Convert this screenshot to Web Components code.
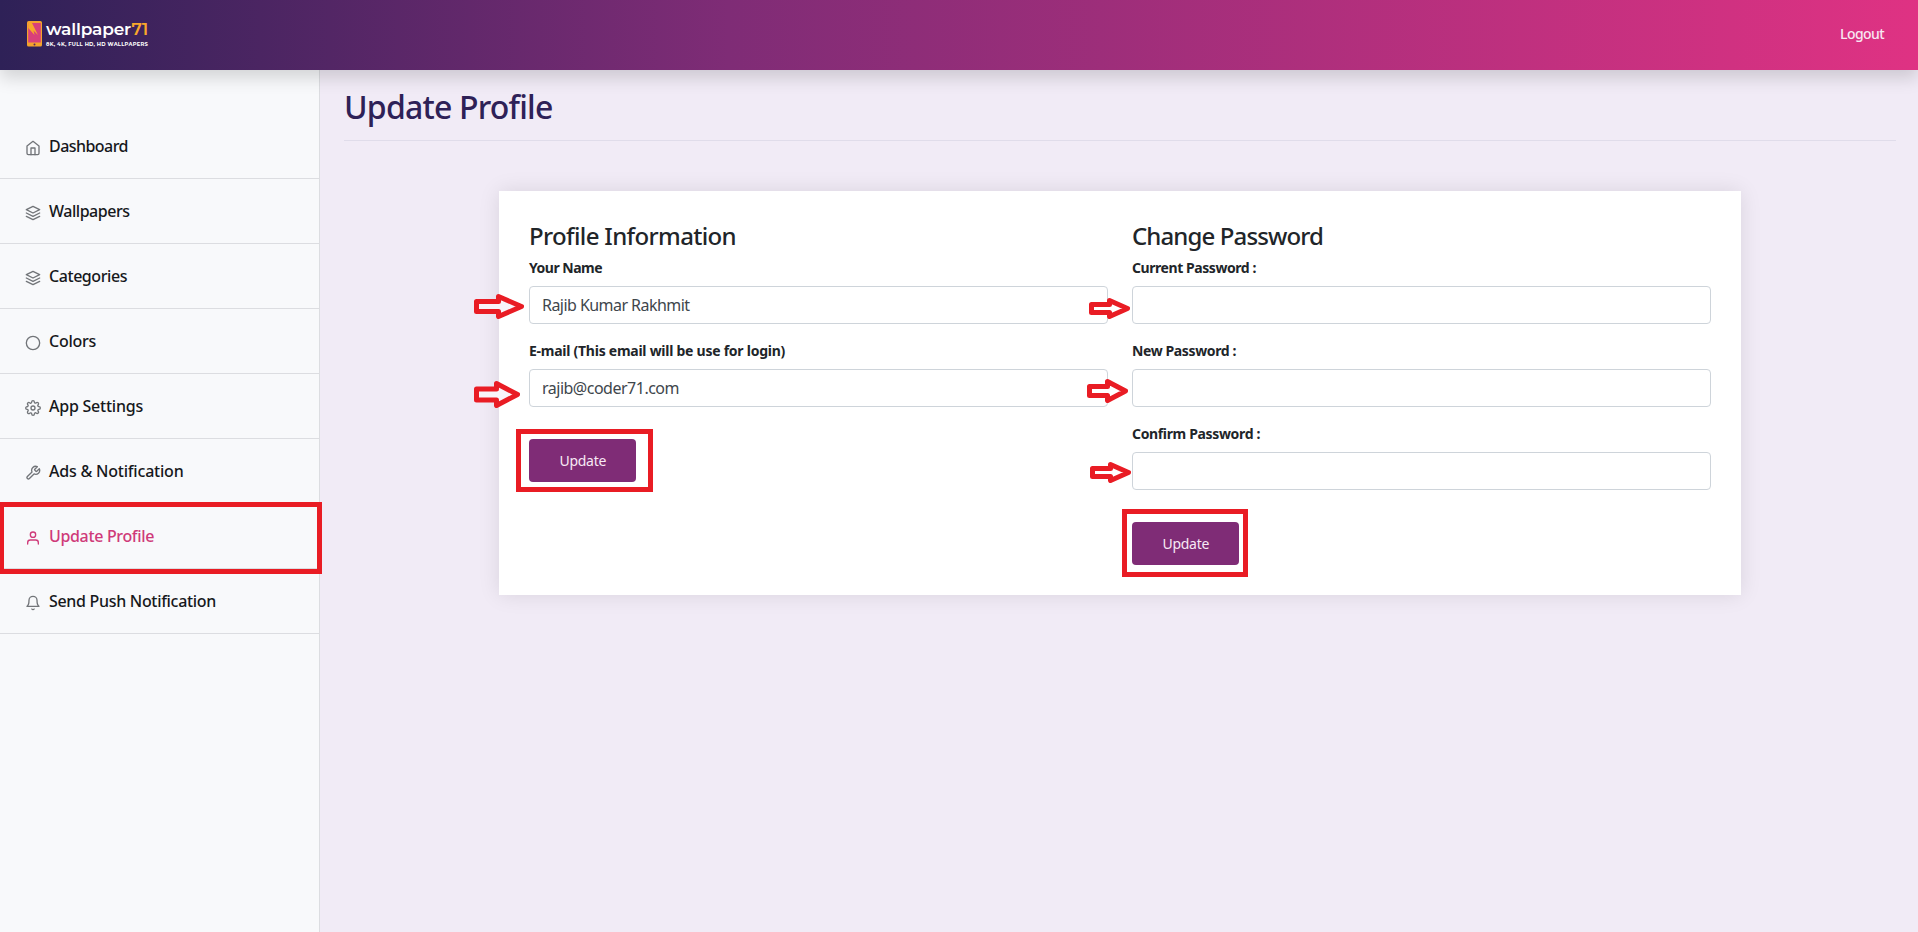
<!DOCTYPE html>
<html lang="en">
<head>
<meta charset="utf-8">
<title>Update Profile</title>
<style>
html,body{margin:0;height:100%}
body{font-family:"Noto Sans","Open Sans",sans-serif;color:#212529;background:#f1ebf6;overflow:hidden}
</style>
</head>
<body>
<admin-app></admin-app>
<script>
const ICONS={
home:'<path d="M3 9l9-7 9 7v11a2 2 0 0 1-2 2H5a2 2 0 0 1-2-2z"/><path d="M9 22V12h6v10"/>',
layers:'<path d="M12 2L2 7l10 5 10-5-10-5zM2 17l10 5 10-5M2 12l10 5 10-5"/>',
circle:'<circle cx="12" cy="12" r="10"/>',
settings:'<circle cx="12" cy="12" r="3"/><path d="M19.4 15a1.65 1.65 0 0 0 .33 1.82l.06.06a2 2 0 0 1 0 2.83 2 2 0 0 1-2.83 0l-.06-.06a1.65 1.65 0 0 0-1.82-.33 1.65 1.65 0 0 0-1 1.51V21a2 2 0 0 1-2 2 2 2 0 0 1-2-2v-.09A1.65 1.65 0 0 0 9 19.4a1.65 1.65 0 0 0-1.82.33l-.06.06a2 2 0 0 1-2.83 0 2 2 0 0 1 0-2.83l.06-.06a1.65 1.65 0 0 0 .33-1.82 1.65 1.65 0 0 0-1.51-1H3a2 2 0 0 1-2-2 2 2 0 0 1 2-2h.09A1.65 1.65 0 0 0 4.6 9a1.65 1.65 0 0 0-.33-1.82l-.06-.06a2 2 0 0 1 0-2.83 2 2 0 0 1 2.83 0l.06.06a1.65 1.65 0 0 0 1.82.33H9a1.65 1.65 0 0 0 1-1.51V3a2 2 0 0 1 2-2 2 2 0 0 1 2 2v.09a1.65 1.65 0 0 0 1 1.51 1.65 1.65 0 0 0 1.82-.33l.06-.06a2 2 0 0 1 2.83 0 2 2 0 0 1 0 2.83l-.06.06a1.65 1.65 0 0 0-.33 1.82V9a1.65 1.65 0 0 0 1.51 1H21a2 2 0 0 1 2 2 2 2 0 0 1-2 2h-.09a1.65 1.65 0 0 0-1.51 1z"/>',
tool:'<path d="M14.7 6.3a1 1 0 0 0 0 1.4l1.6 1.6a1 1 0 0 0 1.4 0l3.77-3.77a6 6 0 0 1-7.94 7.94l-6.91 6.91a2.12 2.12 0 0 1-3-3l6.91-6.91a6 6 0 0 1 7.94-7.94l-3.76 3.76z"/>',
user:'<path d="M20 21v-2a4 4 0 0 0-4-4H8a4 4 0 0 0-4 4v2"/><circle cx="12" cy="7" r="4"/>',
bell:'<path d="M18 8A6 6 0 0 0 6 8c0 7-3 9-3 9h18s-3-2-3-9M13.73 21a2 2 0 0 1-3.46 0"/>'
};
function define(name,html,setup){
  customElements.define(name,class extends HTMLElement{
    connectedCallback(){
      if(this.shadowRoot)return;
      this.attachShadow({mode:'open'}).innerHTML=typeof html==='function'?html(this):html;
      if(setup)setup(this);
    }
  });
}
/* A line of text tracked to a given advance width */
define('fit-text',`<style>:host{display:inline-block;white-space:nowrap}span{display:inline-block}</style><span><slot></slot></span>`,el=>{
  const s=el.shadowRoot.querySelector('span'),w=+el.getAttribute('width');
  const n=[...el.textContent].length;
  s.style.letterSpacing=((w-s.getBoundingClientRect().width)/n)+'px';
});
define('brand-logo',`<style>
:host{display:flex;align-items:flex-start;gap:4px;color:#fff}
svg{display:block;margin-top:1px}
.t{display:flex;flex-direction:column}
.n{font:600 17px/19px Montserrat,"Open Sans",sans-serif;height:20px}
.n b{color:#f9a72b;font-weight:600}
.s{font:700 5.2px/8px Montserrat,"Open Sans",sans-serif;height:8px}
</style>
<svg width="15" height="26" viewBox="0 0 15 26"><rect width="15" height="25.500" rx="1.600" fill="#f5a32c"/><path d="M1.200 2h12.600v19.500H1.200z" fill="#d9407a"/><path d="M1.200 2H5L11 14L6.500 9.500L7.500 14L3.500 9.500L1.200 7z" fill="#f9a72b"/><circle cx="7.500" cy="23.500" r="1" fill="#59275f"/></svg>
<div class="t"><div class="n"><fit-text width="102">wallpaper<b>71</b></fit-text></div><div class="s"><fit-text width="102">8K, 4K, FULL HD, HD WALLPAPERS</fit-text></div></div>`);
define('top-bar',`<style>
:host{display:flex;justify-content:space-between;height:70px;box-sizing:border-box;padding:20px 34px 0 27px;position:relative;z-index:2;background:linear-gradient(90deg,#2e2157,#7f2c76 38%,#df3283);box-shadow:0 8px 16px rgba(0,0,0,.15)}
.o{font-size:14px;font-weight:500;line-height:20px;color:#f8e6f1;margin-top:4px}
</style><brand-logo></brand-logo><div class="o"><fit-text width="44">Logout</fit-text></div>`);
define('nav-item',el=>`<style>
:host{display:flex;box-sizing:border-box;height:65px;padding:21px 0 0 25px;border-bottom:1px solid #dcdde1;color:#16181b;font-size:16px;font-weight:500;line-height:22px;position:relative}
:host([active]){color:#cf3a79}
svg{width:16px;height:16px;margin:5px 8px 0 0;fill:none;stroke:#727579;stroke-width:2;stroke-linecap:round;stroke-linejoin:round;flex:none}
:host([active]) svg{stroke:#cf3a79}
</style><svg viewBox="0 0 24 24">${ICONS[el.getAttribute('icon')]}</svg><slot></slot>`);
define('side-bar',`<style>
:host{display:block;box-sizing:border-box;width:320px;padding-top:44px;background:#f8f9fb;border-right:1px solid #dcdde1;position:relative}
</style>
<nav-item icon="home"><fit-text width="79">Dashboard</fit-text></nav-item>
<nav-item icon="layers"><fit-text width="80.500">Wallpapers</fit-text></nav-item>
<nav-item icon="layers"><fit-text width="78">Categories</fit-text></nav-item>
<nav-item icon="circle"><fit-text width="47">Colors</fit-text></nav-item>
<nav-item icon="settings"><fit-text width="94">App Settings</fit-text></nav-item>
<nav-item icon="tool"><fit-text width="134.500">Ads &amp; Notification</fit-text></nav-item>
<nav-item icon="user" active><fit-text width="105">Update Profile</fit-text><mark-box style="left:0;top:-2px;width:322px;height:72px;border-left-width:4px"></mark-box></nav-item>
<nav-item icon="bell"><fit-text width="167">Send Push Notification</fit-text></nav-item>`);
define('mark-box',`<style>:host{position:absolute;z-index:3;box-sizing:border-box;border:5px solid #e91c24}</style>`);
define('mark-arrow',el=>{const w=+el.getAttribute('w'),h=+el.getAttribute('h'),t=+el.getAttribute('t'),k=+el.getAttribute('k');
const a=h/2-t/2+2,b=h/2+t/2-2;
return `<style>:host{position:absolute;z-index:3;width:${w}px;height:${h}px}svg{display:block}</style><svg width="${w}" height="${h}"><path d="M2.500 ${a+.5}H${k+2.500}V2.500L${w-2.500} ${h/2}L${k+2.500} ${h-2.500}V${b-.5}H2.500Z" fill="${el.getAttribute('fill')||'#fff'}" stroke="#e91c24" stroke-width="5" stroke-linejoin="round"/></svg>`});
define('form-field',el=>`<style>
:host{display:block;position:relative;height:83px}
.l{font-size:14px;font-weight:700;line-height:20px;height:28px;display:block}
.b{box-sizing:border-box;height:38px;border:1px solid #ced4da;border-radius:4px;background:#fff;padding:7px 12px;font-size:16px;line-height:22px;color:#40464c}
</style><div class="l"><fit-text width="${el.getAttribute('lw')}">${el.getAttribute('label')}</fit-text></div><div class="b"><slot></slot></div><slot name="mark"></slot>`);
define('action-button',`<style>
:host{display:block;position:relative;width:107px;height:43px;box-sizing:border-box;border-radius:4px;background:#7f2c76;color:#f7e9f4;font-size:14px;line-height:20px;padding:12px 0 0 30.500px;margin-top:15px}
</style><fit-text width="46.500">Update</fit-text><slot></slot>`);
define('form-column',`<style>
:host{display:block;flex:1}
.h{font-size:24px;font-weight:500;line-height:30px;height:37px}
</style><div class="h"><slot name="title"></slot></div><slot></slot>`);
define('profile-card',`<style>
:host{display:flex;gap:24px;box-sizing:border-box;width:1242px;height:404px;margin:50px 0 0 155px;padding:30px;background:#fff;box-shadow:0 0 20px rgba(0,0,0,.1)}
</style>
<form-column><fit-text slot="title" width="207">Profile Information</fit-text>
<form-field label="Your Name" lw="73"><fit-text width="147.500">Rajib Kumar Rakhmit</fit-text><mark-arrow slot="mark" w="50" h="25" t="15" k="22" fill="#f8f4fa" style="left:-55px;top:36px"></mark-arrow></form-field>
<form-field label="E-mail (This email will be use for login)" lw="256"><fit-text width="137">rajib@coder71.com</fit-text><mark-arrow slot="mark" w="46" h="27" t="16" k="20" fill="#f8f4fa" style="left:-55px;top:40px"></mark-arrow></form-field>
<action-button><mark-box style="left:-13px;top:-10px;width:137px;height:63px"></mark-box></action-button></form-column>
<form-column><fit-text slot="title" width="191">Change Password</fit-text>
<form-field label="Current Password :" lw="124"><mark-arrow slot="mark" w="41" h="21" t="13" k="18" style="left:-43px;top:40px"></mark-arrow></form-field>
<form-field label="New Password :" lw="104"><mark-arrow slot="mark" w="41" h="24" t="14" k="18" style="left:-45px;top:38px"></mark-arrow></form-field>
<form-field label="Confirm Password :" lw="128"><mark-arrow slot="mark" w="41" h="21" t="13" k="18" style="left:-42px;top:38px"></mark-arrow></form-field>
<action-button><mark-box style="left:-10px;top:-13px;width:126px;height:68px"></mark-box></action-button></form-column>`);
define('page-main',`<style>
:host{display:block;flex:1;padding:15px 22px 0 24px;box-sizing:border-box}
.h{height:56px;box-sizing:border-box;border-bottom:1px solid #e0dcea;font-size:32px;font-weight:500;line-height:43px;color:#2e2157}
</style><div class="h"><fit-text width="208.500">Update Profile</fit-text></div><profile-card></profile-card>`);
define('admin-app',`<style>
:host{display:flex;flex-direction:column;height:100vh}
.r{display:flex;flex:1}
</style><top-bar></top-bar><div class="r"><side-bar></side-bar><page-main></page-main></div>`);
</script>
</body>
</html>
